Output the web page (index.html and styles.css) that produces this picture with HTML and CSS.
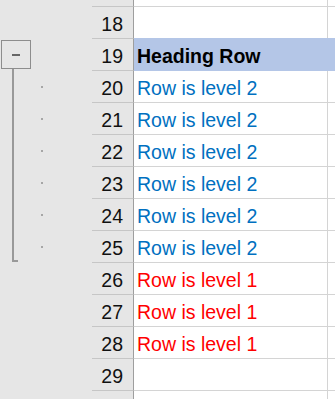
FILE: index.html
```
<!DOCTYPE html>
<html lang="en">
<head>
  <meta charset="utf-8">
  <title>Outline</title>
  <link rel="stylesheet" href="styles.css">
</head>
<body>
  <div class="sheet">
    <div class="row edge-top">
      <div class="outline"></div>
      <div class="num"></div>
      <div class="cell"><div class="c"></div><div class="c"></div></div>
    </div>
    <div class="row">
      <div class="outline"></div>
      <div class="num">18</div>
      <div class="cell above-fill"><div class="c"></div><div class="c"></div></div>
    </div>
    <div class="row">
      <div class="outline first">
        <div class="toggle"><span class="minus"></span></div>
        <div class="stem"></div>
      </div>
      <div class="num">19</div>
      <div class="cell fill"><div class="c head">Heading Row</div><div class="c"></div></div>
    </div>
    <div class="row">
      <div class="outline"><div class="stem"></div><div class="dot"></div></div>
      <div class="num">20</div>
      <div class="cell"><div class="c lvl2">Row is level 2</div><div class="c"></div></div>
    </div>
    <div class="row">
      <div class="outline"><div class="stem"></div><div class="dot"></div></div>
      <div class="num">21</div>
      <div class="cell"><div class="c lvl2">Row is level 2</div><div class="c"></div></div>
    </div>
    <div class="row">
      <div class="outline"><div class="stem"></div><div class="dot"></div></div>
      <div class="num">22</div>
      <div class="cell"><div class="c lvl2">Row is level 2</div><div class="c"></div></div>
    </div>
    <div class="row">
      <div class="outline"><div class="stem"></div><div class="dot"></div></div>
      <div class="num">23</div>
      <div class="cell"><div class="c lvl2">Row is level 2</div><div class="c"></div></div>
    </div>
    <div class="row">
      <div class="outline"><div class="stem"></div><div class="dot"></div></div>
      <div class="num">24</div>
      <div class="cell"><div class="c lvl2">Row is level 2</div><div class="c"></div></div>
    </div>
    <div class="row">
      <div class="outline"><div class="stem end"></div><div class="dot"></div></div>
      <div class="num">25</div>
      <div class="cell"><div class="c lvl2">Row is level 2</div><div class="c"></div></div>
    </div>
    <div class="row">
      <div class="outline"></div>
      <div class="num">26</div>
      <div class="cell"><div class="c lvl1">Row is level 1</div><div class="c"></div></div>
    </div>
    <div class="row">
      <div class="outline"></div>
      <div class="num">27</div>
      <div class="cell"><div class="c lvl1">Row is level 1</div><div class="c"></div></div>
    </div>
    <div class="row">
      <div class="outline"></div>
      <div class="num">28</div>
      <div class="cell"><div class="c lvl1">Row is level 1</div><div class="c"></div></div>
    </div>
    <div class="row">
      <div class="outline"></div>
      <div class="num">29</div>
      <div class="cell"><div class="c"></div><div class="c"></div></div>
    </div>
    <div class="row">
      <div class="outline"></div>
      <div class="num"></div>
      <div class="cell"><div class="c"></div><div class="c"></div></div>
    </div>
  </div>
</body>
</html>
```

FILE: styles.css
```
html, body {
  margin: 0;
  background: #e6e6e6;
  overflow: hidden;
}

.sheet {
  font-family: "Liberation Sans", Arial, sans-serif;
  font-size: 19.5px;
  height: 399px;
  overflow: hidden;
}

.row {
  display: grid;
  grid-template-columns: 92px 42px 1fr;
  height: 32px;
}
.row.edge-top {
  height: 7px;
}

.outline {
  display: flex;
  align-items: center;
  background: #e6e6e6;
}
.outline.first {
  flex-direction: column;
  align-items: flex-start;
}

.toggle {
  box-sizing: border-box;
  width: 30px;
  height: 29px;
  margin: 1px 0 0 1px;
  border: 1px solid #8d8d8d;
  display: flex;
  align-items: center;
  justify-content: center;
}
.minus {
  width: 8px;
  height: 2px;
  background: #666;
}

.stem {
  align-self: stretch;
  width: 2px;
  margin-left: 12px;
  background: #999;
}
.outline.first .stem {
  flex: 1;
}
.stem.end {
  box-sizing: border-box;
  width: 6px;
  height: 31px;
  align-self: flex-start;
  background: none;
  border-left: 2px solid #999;
  border-bottom: 2px solid #999;
}

.dot {
  width: 2px;
  height: 2px;
  margin-left: 27px;
  margin-bottom: 1px;
  background: #a6a6a6;
}
.stem.end + .dot {
  margin-left: 23px;
}

.num {
  box-sizing: border-box;
  background: #e6e6e6;
  border-right: 1px solid #9e9e9e;
  border-bottom: 1px solid #c6c6c6;
  text-align: right;
  padding: 3px 10px 0 0;
  line-height: 28px;
  color: #111;
}

.cell {
  display: grid;
  grid-template-columns: 194px 1fr;
  background: #fff;
  border-bottom: 1px solid #d4d4d4;
}
.cell.above-fill {
  border-bottom-color: #b4c6e7;
}
.cell.fill {
  background: #b4c6e7;
  border-bottom-color: #b4c6e7;
}

.c {
  box-sizing: border-box;
  padding: 3px 0 0 3px;
  line-height: 28px;
  white-space: nowrap;
}
.c:first-child {
  border-right: 1px solid #d4d4d4;
}
.cell.fill .c:first-child {
  border-right-color: #b4c6e7;
}

.head {
  font-weight: bold;
  color: #000;
}
.lvl2 {
  color: #0070c0;
}
.lvl1 {
  color: #ff0000;
}
```
